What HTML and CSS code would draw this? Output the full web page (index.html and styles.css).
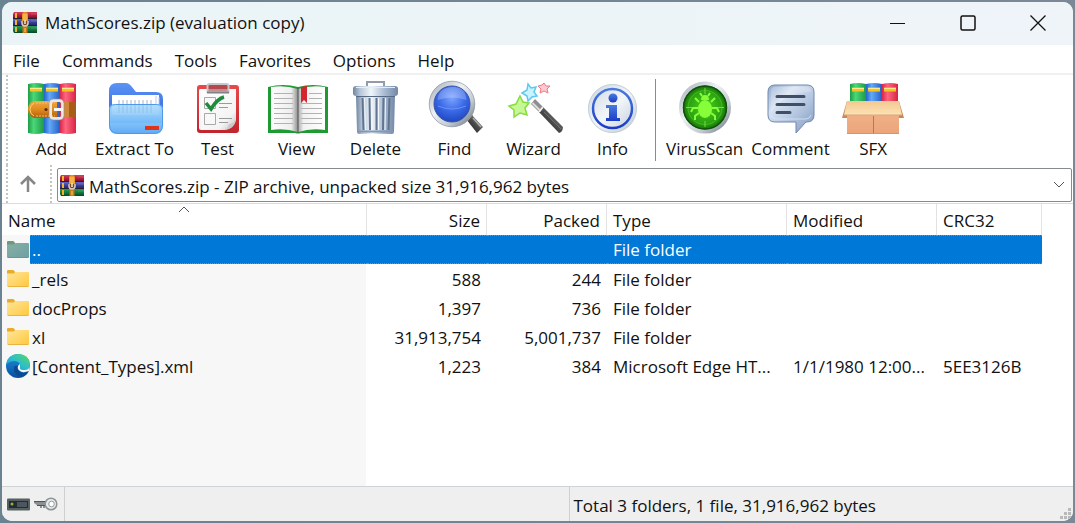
FILE: index.html
```html
<!DOCTYPE html>
<html lang="en">
<head>
    <meta charset="UTF-8">
    <meta name="viewport" content="width=device-width, initial-scale=1.0">
    <title>MathScores.zip (evaluation copy)</title>
    <link rel="stylesheet" href="styles.css">
</head>
<body>

<!-- Shared shapes -->
<svg class="defs" aria-hidden="true">
    <defs>
        <linearGradient id="gRed" x2="0" y2="1"><stop offset="0" stop-color="#d8405c"/><stop offset=".5" stop-color="#b01c3a"/><stop offset="1" stop-color="#6d0d1f"/></linearGradient>
        <linearGradient id="gBlue" x2="0" y2="1"><stop offset="0" stop-color="#6468c4"/><stop offset=".5" stop-color="#3c3c96"/><stop offset="1" stop-color="#1d1d5c"/></linearGradient>
        <linearGradient id="gGreen" x2="0" y2="1"><stop offset="0" stop-color="#2c9a58"/><stop offset=".5" stop-color="#127a40"/><stop offset="1" stop-color="#0a4421"/></linearGradient>
        <linearGradient id="bookGreen"><stop offset="0" stop-color="#1e9c48"/><stop offset=".35" stop-color="#4ad878"/><stop offset="1" stop-color="#1c9a48"/></linearGradient>
        <linearGradient id="bookBlue"><stop offset="0" stop-color="#2464c8"/><stop offset=".35" stop-color="#62a8fb"/><stop offset="1" stop-color="#2560c4"/></linearGradient>
        <linearGradient id="bookRed"><stop offset="0" stop-color="#d82848"/><stop offset=".35" stop-color="#ff6680"/><stop offset="1" stop-color="#d82444"/></linearGradient>
        <linearGradient id="belt" x2="0" y2="1"><stop offset="0" stop-color="#f2a840"/><stop offset=".5" stop-color="#e08a1e"/><stop offset="1" stop-color="#b05e0c"/></linearGradient>
        <linearGradient id="metal" x2="1" y2="1"><stop offset="0" stop-color="#a8b0ba"/><stop offset=".4" stop-color="#eef1f4"/><stop offset=".7" stop-color="#c4cbd2"/><stop offset="1" stop-color="#6f7882"/></linearGradient>
        <linearGradient id="folderBack" x2="0" y2="1"><stop offset="0" stop-color="#5b93f5"/><stop offset="1" stop-color="#2f5fd8"/></linearGradient>
        <linearGradient id="folderFront" x2="0" y2="1"><stop offset="0" stop-color="#b5defc"/><stop offset=".5" stop-color="#84c6fb"/><stop offset="1" stop-color="#58a6f4"/></linearGradient>
        <linearGradient id="clip" x2="0" y2="1"><stop offset="0" stop-color="#e8494a"/><stop offset="1" stop-color="#c2242e"/></linearGradient>
        <linearGradient id="paper" x2="1" y2="1"><stop offset="0" stop-color="#fff"/><stop offset=".75" stop-color="#f4f4f4"/><stop offset="1" stop-color="#bcbcbc"/></linearGradient>
        <linearGradient id="pageL"><stop offset="0" stop-color="#fdfdfd"/><stop offset=".75" stop-color="#eee"/><stop offset="1" stop-color="#8e8e8e"/></linearGradient>
        <linearGradient id="pageR"><stop offset="0" stop-color="#a8a8a8"/><stop offset=".2" stop-color="#f1f1f1"/><stop offset="1" stop-color="#fff"/></linearGradient>
        <linearGradient id="can"><stop offset="0" stop-color="#6f849f"/><stop offset=".15" stop-color="#b4c4d8"/><stop offset=".4" stop-color="#f0f5fa"/><stop offset=".7" stop-color="#a9bbd2"/><stop offset="1" stop-color="#7288a6"/></linearGradient>
        <radialGradient id="lens" cx=".5" cy=".35" r=".65"><stop offset="0" stop-color="#7ea4ff"/><stop offset=".5" stop-color="#3a6ae8"/><stop offset="1" stop-color="#1b3fb8"/></radialGradient>
        <linearGradient id="handle" x1="0" y1="1" x2="1" y2="0"><stop offset="0" stop-color="#111"/><stop offset=".5" stop-color="#4c4c4c"/><stop offset="1" stop-color="#aaa"/></linearGradient>
        <linearGradient id="infoBg" x2="1" y2="1"><stop offset="0" stop-color="#cbd5df"/><stop offset=".5" stop-color="#f2f6f9"/><stop offset="1" stop-color="#bcc9d5"/></linearGradient>
        <linearGradient id="infoInk" x2="0" y2="1"><stop offset="0" stop-color="#4a7ae0"/><stop offset="1" stop-color="#1c3cc8"/></linearGradient>
        <radialGradient id="scan"><stop offset="0" stop-color="#4cd01c"/><stop offset=".7" stop-color="#2aa010"/><stop offset="1" stop-color="#0c5a06"/></radialGradient>
        <linearGradient id="bubble" x2="1" y2="1"><stop offset="0" stop-color="#8fa8cc"/><stop offset=".3" stop-color="#d6e2f2"/><stop offset=".6" stop-color="#b4c6e0"/><stop offset="1" stop-color="#7f98be"/></linearGradient>
        <linearGradient id="box" x2="0" y2="1"><stop offset="0" stop-color="#d08a58"/><stop offset=".4" stop-color="#f0b088"/><stop offset="1" stop-color="#eba47a"/></linearGradient>
        <linearGradient id="flap" x2="0" y2="1"><stop offset="0" stop-color="#f2c890"/><stop offset="1" stop-color="#fde3b4"/></linearGradient>
        <linearGradient id="yellow" x2="1" y2="1"><stop offset="0" stop-color="#ffe59a"/><stop offset="1" stop-color="#ffc83c"/></linearGradient>
        <linearGradient id="teal" x2="1" y2="1"><stop offset="0" stop-color="#86b0a6"/><stop offset="1" stop-color="#6f9fa0"/></linearGradient>
        <linearGradient id="edgeTop" y1="1" y2="0"><stop offset="0" stop-color="#1a90d8"/><stop offset=".5" stop-color="#2cc0c8"/><stop offset="1" stop-color="#62d858"/></linearGradient>
        <linearGradient id="edgeLow" x2="0" y2="1"><stop offset="0" stop-color="#1c90e0"/><stop offset="1" stop-color="#0b4f9c"/></linearGradient>

        <symbol id="archive" viewBox="0 0 24 21">
            <path d="M1 0h23v7H0V2z" fill="url(#gRed)"/>
            <path d="M0 7h24v7H0z" fill="url(#gBlue)"/>
            <path d="M0 14h24v7H1l-1-2z" fill="url(#gGreen)"/>
            <path d="M3 1v5M3 8v5M3 15v5" stroke="#f2b430" stroke-width="2"/>
            <path d="M0 6.500h24M0 13.500h24" stroke="#26202c"/>
            <path d="M18 2h6M18 9h6M18 16h6" stroke="#fff" stroke-opacity=".15"/>
            <path d="M9 3q0-3 3-3t3 3v7H9z" fill="#e89828"/>
            <path d="M9.500 14h5v7h-5z" fill="#c87818"/>
            <path d="M10 3h4M10 5h4M10 7h4M11 17h2M11 19h2" stroke="#ffcf68"/>
            <path d="M9 9v2q0 3 3 3t3-3V9" fill="#7c4a20" stroke="#d8ccc4" stroke-width="1.500"/>
            <path d="M12 8v4" stroke="#f4ead8" stroke-width="1.500"/>
        </symbol>
        <symbol id="books" viewBox="0 0 48 51">
            <path d="M0 1q8-2 16 0v49q-8 2-16 0z" fill="url(#bookGreen)"/>
            <path d="M16 1q8-2 16 0v49q-8 2-16 0z" fill="url(#bookBlue)"/>
            <path d="M32 1q8-2 16 0v49q-8 2-16 0z" fill="url(#bookRed)"/>
            <path d="M2 6.500h12M18 6.500h12M34 6.500h12" stroke="#f8c51c" stroke-width="4"/>
            <path d="M2 5.500h12M18 5.500h12M34 5.500h12" stroke="#ffe987"/>
        </symbol>
        <symbol id="folder" viewBox="0 0 22 17">
            <path d="M0 1q0-1 1-1h5q1 0 2 2v3H0z" fill="#e8ac28"/>
            <path d="M0 3.500h6.500L8.500 2H21q1 0 1 1v13q0 1-1 1H1q-1 0-1-1z" fill="url(#yellow)"/>
            <path d="M1 16.500h20" stroke="#eab445"/>
        </symbol>
        <symbol id="folder-up" viewBox="0 0 22 17">
            <path d="M0 1q0-1 1-1h5q1 0 2 2v3H0z" fill="#6f9a7a"/>
            <path d="M0 3.500h6.500L8.500 2H21q1 0 1 1v13q0 1-1 1H1q-1 0-1-1z" fill="url(#teal)"/>
            <path d="M1 16.500h20" stroke="#6c978c"/>
        </symbol>
    </defs>
</svg>

<div class="window">
    <header class="titlebar">
        <svg class="archive-icon" aria-hidden="true"><use href="#archive"/></svg>
        <h1 class="title">MathScores.zip (evaluation copy)</h1>
        <div class="window-buttons">
            <button type="button" aria-label="Minimize"><svg width="16" height="16" viewBox="0 0 16 16"><path d="M0 8.500h15"/></svg></button>
            <button type="button" aria-label="Maximize"><svg width="16" height="16" viewBox="0 0 16 16"><rect x="1" y="1" width="14" height="14" rx="1.500" stroke-width="1.500"/></svg></button>
            <button type="button" aria-label="Close"><svg width="16" height="16" viewBox="0 0 16 16"><path d="M.5.500l15 15M15.500.500l-15 15" stroke-width="1.300"/></svg></button>
        </div>
    </header>

    <nav class="menu">
        <button type="button">File</button>
        <button type="button">Commands</button>
        <button type="button">Tools</button>
        <button type="button">Favorites</button>
        <button type="button">Options</button>
        <button type="button">Help</button>
    </nav>

    <div class="toolbar">
        <span class="grip"></span>
        <button type="button" class="tool">
            <svg viewBox="0 0 64 56">
                <use href="#books" x="8" y="4" width="48" height="51"/>
                <path d="M41 23h15v15H41z" fill="#a85c18"/>
                <path d="M44 23h5v15h-5z" fill="#d08838"/>
                <path d="M14 22h23v17H14q-6-2-6-8.500T14 22z" fill="url(#belt)"/>
                <path d="M14 24q-4 2-4 6.500t4 6.500" fill="none" stroke="#ffd070"/>
                <path d="M16 24h19M16 37h19" stroke="#f8c070" stroke-dasharray="2 1"/>
                <circle cx="26" cy="30.500" r="1.600" fill="#5c2c08"/>
                <rect x="30.500" y="21.500" width="12" height="18" rx="3" fill="none" stroke="#e9e6e4" stroke-width="3"/>
                <rect x="29" y="20" width="15" height="21" rx="4" fill="none" stroke="#9b8f8a" stroke-width=".6"/>
                <path d="M34 30.500h9" stroke="#f6f6f6" stroke-width="3"/>
            </svg>
            Add
        </button>
        <button type="button" class="tool">
            <svg viewBox="0 0 64 56">
                <path d="M6 12q0-8 8-8h9q3 0 6 4l4 5h20q7 0 7 7v24H6z" fill="url(#folderBack)"/>
                <path d="M9 16h47v20H9z" fill="#fff"/>
                <path d="M16 21v9M20 21v9M24 21v9M28 21v9M32 21v9M36 21v9M40 21v9M44 21v9M48 21v9" stroke="#a9b4c0"/>
                <path d="M53 17v20M56 18v19" stroke="#b8cce8"/>
                <path d="M6 31q0-6 6-6h42q6 0 6 6v15q0 9-9 9H15q-9 0-9-9z" fill="url(#folderFront)" fill-opacity=".95"/>
                <path d="M16 26v8M20 26v8M24 26v8M28 26v8M32 26v8M36 26v8M40 26v8M44 26v8M48 26v8" stroke="#8db8dc" stroke-opacity=".7"/>
                <path d="M6.500 31q0-5.500 6-5.500h41q6 0 6 5.500v15q0 8.500-9 8.500h-35q-9 0-9-8.500z" fill="none" stroke="#4d9aec"/>
                <path d="M42 47h14v4H42z" fill="#e03418"/>
            </svg>
            Extract To
        </button>
        <button type="button" class="tool">
            <svg viewBox="0 0 64 56">
                <rect x="11" y="6" width="42" height="48" rx="3" fill="url(#clip)"/>
                <path d="M14 10h36v31q-2 9-11 10H15q-2 0-2-2V12q0-2 1-2z" fill="url(#paper)"/>
                <path d="M50 41q-3 4-7 4-1 5-5 6 10-1 12-10z" fill="#c9c9c9"/>
                <path d="M18.500 18.500h11v11h-11zM18.500 34.500h11v11h-11z" fill="#f8f8f8" stroke="#a9a9a9"/>
                <path d="M33 24.500h13M33 28.500h9M33 39.500h13M33 43.500h9" stroke="#9a9a9a"/>
                <path d="M20 24l5 6Q31 20 38 18" fill="none" stroke="#1f8a3a" stroke-width="3.500"/>
                <path d="M21.500 13V7q0-2 2-2h17q2 0 2 2v6z" fill="#98464c" fill-opacity=".6" stroke="#c5c8cc" stroke-width="2"/>
                <path d="M21 13.500h22" stroke="#7f8388" stroke-width="2"/>
            </svg>
            Test
        </button>
        <button type="button" class="tool">
            <svg viewBox="0 0 64 56">
                <path d="M3 8q15-4 30 0 15-4 30 0v46H36q-3 1-6 0H3z" fill="#1f9a33"/>
                <path d="M6 8q14-2 27 2v43q-13-4-27-2z" fill="url(#pageL)"/>
                <path d="M60 8q-14-2-27 2v43q13-4 27-2z" fill="url(#pageR)"/>
                <path d="M9 14.500h19M9 19.500h19M9 24.500h19M9 29.500h19M9 34.500h19M9 39.500h19M9 44.500h19M44 14.500h13M44 19.500h13M36 24.500h21M36 29.500h21M36 34.500h21M36 39.500h21M36 44.500h21" stroke="#b2b2b2"/>
                <path d="M36 8l6-1v17l-3-3-3 3z" fill="#d3262e"/>
                <path d="M33 9v45" stroke="#555"/>
            </svg>
            View
        </button>
        <button type="button" class="tool">
            <svg viewBox="0 0 64 56">
                <path d="M23 8V3h17v5" fill="none" stroke="#939ba8" stroke-width="2"/>
                <path d="M12 16h39l-1 37q0 2-2 2H15q-2 0-2-2z" fill="url(#can)"/>
                <path d="M18.500 19l1 32M25.500 19l.5 32M32.500 19v32M39.500 19l-.5 32M45.500 19l-1 32" stroke="#61758f" stroke-width="2"/>
                <path d="M20.500 19l1 32M27.500 19l.5 32M34.500 19v32M41.500 19l-.5 32" stroke="#f2f6fa"/>
                <rect x="9" y="7" width="45" height="10" rx="3" fill="url(#can)"/>
                <path d="M12 8.500h39" stroke="#e6edf4"/>
                <path d="M12 17.500h39" stroke="#566a85"/>
                <path d="M14 52.500h35" stroke="#8297b2" stroke-width="2"/>
            </svg>
            Delete
        </button>
        <button type="button" class="tool">
            <svg viewBox="0 0 64 56">
                <path d="M43 40l5-5 12 13-6 6z" fill="url(#handle)"/>
                <path d="M41 38l5-5 4 4-5 5z" fill="#6a6a6a"/>
                <path d="M50 39l8 9" stroke="#b0b0b0" stroke-width="1.500"/>
                <circle cx="29" cy="25" r="20.500" fill="url(#lens)" stroke="url(#metal)" stroke-width="5"/>
                <circle cx="29" cy="25" r="22.800" fill="none" stroke="#8e98a6" stroke-width=".7"/>
                <circle cx="29" cy="25" r="18" fill="none" stroke="#3a54a4"/>
                <path d="M14.500 21q1-12 14.500-13t14.500 13q-14-5-29 0z" fill="#fff" fill-opacity=".22"/>
                <path d="M15 27q14 6 28 0" fill="none" stroke="#7ba0ff" stroke-opacity=".7"/>
            </svg>
            Find
        </button>
        <button type="button" class="tool">
            <svg viewBox="0 0 64 56">
                <path d="M18 17l3 6 6 1-4 5 2 7-7-2-6 4v-7l-5-4 7-2z" fill="#c5f794" stroke="#86dc42" stroke-width="1.500"/>
                <path d="M26 5l3 4 5-1-2 5 3 4-5 1-4 4-1-5-5-3 5-3z" fill="#c8f4ff" stroke="#60c8ee" stroke-width="1.500"/>
                <path d="M42 4l2 3h4l-3 3 1 4-4-2-4 2 1-4-3-3 4-1z" fill="#ffc9d0" stroke="#ee7888"/>
                <path d="M29 25l4-5 9 9-4 5z" fill="#8e8e8e"/>
                <path d="M37 33l4-5 20 20q0 5-4 6z" fill="url(#handle)"/>
                <path d="M30.500 24l8 8" stroke="#dcdcdc" stroke-width="2"/>
                <path d="M37 33l4-5" stroke="#f0f0f0" stroke-width="2"/>
                <path d="M42 33l17 17" stroke="#707070"/>
            </svg>
            Wizard
        </button>
        <button type="button" class="tool">
            <svg viewBox="0 0 64 56">
                <circle cx="31.500" cy="29.500" r="24" fill="url(#infoBg)" stroke="#c2ccd4"/>
                <circle cx="31.500" cy="29.500" r="19.500" fill="none" stroke="url(#infoInk)" stroke-width="2.500"/>
                <circle cx="32" cy="19" r="4.500" fill="url(#infoInk)"/>
                <path d="M25 26h11v13h3v3H25v-3h3V29h-3z" fill="url(#infoInk)"/>
            </svg>
            Info
        </button>
        <span class="separator"></span>
        <button type="button" class="tool">
            <svg viewBox="0 0 64 56">
                <circle cx="32" cy="28.500" r="24" fill="url(#scan)" stroke="url(#metal)" stroke-width="4"/>
                <circle cx="32" cy="28.500" r="21.500" fill="none" stroke="#11510c" stroke-width="1.500"/>
                <circle cx="32" cy="28.500" r="17" fill="none" stroke="#58c832" stroke-opacity=".6"/>
                <path d="M32 9v6M32 42v6M13 28.500h6M45 28.500h6" stroke="#6fe03c"/>
                <path d="M26 23l-4-4M38 23l4-4M25 29h-5l-2 4M39 29h5l2 4M26 34l-4 3v4M38 34l4 3v4M29 17l-2-3M35 17l2-3" fill="none" stroke="#86ff38" stroke-width="2"/>
                <path d="M28 21q0-5 4-5t4 5z" fill="#86ff38"/>
                <ellipse cx="32" cy="30" rx="7" ry="9" fill="#86ff38"/>
            </svg>
            VirusScan
        </button>
        <button type="button" class="tool">
            <svg viewBox="0 0 64 56">
                <path d="M17 6h32q7 0 7 7v23q0 7-7 7h-1L38 54V43H17q-7 0-7-7V13q0-7 7-7z" fill="url(#bubble)" stroke="#7188ac"/>
                <path d="M17 8h30q6 0 6 5-26 0-40 20V13q0-5 4-5z" fill="#fff" fill-opacity=".22"/>
                <path d="M13 36q1 4 5 4h30q4 0 5-4" fill="none" stroke="#dbe6f5" stroke-opacity=".8"/>
                <path d="M19 17.500h27M19 25.500h27M19 33.500h13" stroke="#414f66" stroke-width="3" stroke-linecap="round"/>
            </svg>
            Comment
        </button>
        <button type="button" class="tool">
            <svg viewBox="0 0 64 56">
                <use href="#books" x="9" y="4" width="48" height="51"/>
                <path d="M6 22h52v33H6z" fill="url(#box)"/>
                <path d="M6 22v17H1zM58 22v17h5z" fill="#c8875c"/>
                <path d="M6 22h52l3 14H3z" fill="url(#flap)"/>
                <path d="M3 36h58" stroke="#d9a878"/>
                <path d="M32.500 37v18" stroke="#b87850"/>
                <path d="M6 54.500h52" stroke="#d49470"/>
            </svg>
            SFX
        </button>
    </div>

    <div class="address-bar">
        <span class="grip"></span>
        <button type="button" class="up" aria-label="Up one level">
            <svg width="18" height="18" viewBox="0 0 18 18"><path d="M9 17V2M2 9l7-7 7 7"/></svg>
        </button>
        <span class="grip"></span>
        <div class="address">
            <svg class="archive-icon" aria-hidden="true"><use href="#archive"/></svg>
            <select aria-label="Current path">
                <option>MathScores.zip - ZIP archive, unpacked size 31,916,962 bytes</option>
            </select>
            <svg class="chevron" width="12" height="8" viewBox="0 0 12 8"><path d="M1 1l5 5 5-5"/></svg>
        </div>
    </div>

    <main class="file-list">
        <table class="files">
            <colgroup>
                <col class="col-icon"><col class="col-name"><col class="col-size"><col class="col-size">
                <col class="col-type"><col class="col-modified"><col class="col-crc">
            </colgroup>
            <thead>
                <tr>
                    <th colspan="2" aria-sort="ascending">Name<svg class="sort" width="12" height="7" viewBox="0 0 12 7"><path d="M1 6l5-5 5 5"/></svg></th>
                    <th class="num">Size</th>
                    <th class="num">Packed</th>
                    <th>Type</th>
                    <th>Modified</th>
                    <th>CRC32</th>
                </tr>
            </thead>
            <tbody>
                <tr class="selected">
                    <td class="icon"><svg class="folder"><use href="#folder-up"/></svg></td>
                    <td class="name">..</td><td class="num"></td><td class="num"></td><td>File folder</td><td></td><td></td>
                </tr>
                <tr>
                    <td class="icon"><svg class="folder"><use href="#folder"/></svg></td>
                    <td class="name">_rels</td><td class="num">588</td><td class="num">244</td><td>File folder</td><td></td><td></td>
                </tr>
                <tr>
                    <td class="icon"><svg class="folder"><use href="#folder"/></svg></td>
                    <td class="name">docProps</td><td class="num">1,397</td><td class="num">736</td><td>File folder</td><td></td><td></td>
                </tr>
                <tr>
                    <td class="icon"><svg class="folder"><use href="#folder"/></svg></td>
                    <td class="name">xl</td><td class="num">31,913,754</td><td class="num">5,001,737</td><td>File folder</td><td></td><td></td>
                </tr>
                <tr>
                    <td class="icon">
                        <svg class="edge" viewBox="0 0 24 24">
                            <circle cx="12" cy="12" r="12" fill="url(#edgeLow)"/>
                            <path d="M0 11Q2 0 12 0q11 0 12 10 0 6-6 6-5 0-4-3 1-5-5-6-6 0-9 4z" fill="url(#edgeTop)"/>
                            <path d="M8 13q-1 8 7 10 5-1 7-5-5 2-8 0-3-2-2-6-3-1-4 1z" fill="#0c4a94"/>
                            <path d="M14 10q-3 2-2 5 3 5 11 2l1-5q-1 4-6 4-5 0-4-3z" fill="#f7f7f7"/>
                        </svg>
                    </td>
                    <td class="name">[Content_Types].xml</td><td class="num">1,223</td><td class="num">384</td><td>Microsoft Edge HT...</td><td>1/1/1980 12:00...</td><td>5EE3126B</td>
                </tr>
            </tbody>
        </table>
    </main>

    <footer class="statusbar">
        <div class="status-icons">
            <svg width="23" height="13" viewBox="0 0 23 13">
                <rect width="23" height="12" y=".5" rx="1" fill="#53605f"/>
                <rect x="2" y="3" width="19" height="7" fill="#252b2e"/>
                <rect x="10" y="4" width="10" height="5" fill="#4c5560"/>
                <circle cx="5" cy="6" r="1.500" fill="#9cb03c"/>
            </svg>
            <svg width="24" height="14" viewBox="0 0 24 14">
                <path d="M0 4h13v5h-2v2H9V9H8v2H6V9H4L0 6z" fill="#8b9192"/>
                <path d="M0 4.500h12M3 8.500h9" stroke="#4f5658"/>
                <circle cx="17" cy="7" r="5.800" fill="#e7eaea" stroke="#8d9496" stroke-width="1.500"/>
                <circle cx="17.500" cy="7" r="2.800" fill="#fff" stroke="#949a9c"/>
            </svg>
        </div>
        <div class="status-pane"></div>
        <div class="status-pane">Total 3 folders, 1 file, 31,916,962 bytes</div>
        <svg class="resize" width="12" height="12" viewBox="0 0 12 12"><path d="M9 0h3v3H9zM5 4h3v3H5zM9 4h3v3H9zM1 8h3v3H1zM5 8h3v3H5zM9 8h3v3H9z"/></svg>
    </footer>
</div>

</body>
</html>
```

FILE: styles.css
```css
/* General Styling */
* {
    box-sizing: border-box;
}

body {
    margin: 0;
    height: 100vh;
    padding: 2px;
    display: flex;
    background: linear-gradient(90deg, #6b8290, #7b8996);
    font-family: "Open Sans", "Noto Sans", sans-serif;
    font-size: 17px;
    color: #111;
}

button,
select {
    font: inherit;
    color: inherit;
    background: none;
    border: none;
    margin: 0;
    padding: 0;
}

svg {
    display: block;
    flex: none;
}

.defs {
    position: absolute;
    width: 0;
    height: 0;
}

.window {
    flex: 1;
    min-width: 0;
    display: flex;
    flex-direction: column;
    background-color: #fff;
    border-radius: 10px;
    overflow: hidden;
}

.archive-icon {
    width: 24px;
    height: 21px;
}

/* Title Bar */
.titlebar {
    display: flex;
    align-items: center;
    height: 43px;
    padding: 0 0 2px 11px;
    gap: 8px;
    background: linear-gradient(90deg, #eaf4f7, #eff4f9);
}

.title {
    flex: 1;
    margin: 0;
    font-size: 17px;
    font-weight: normal;
}

.window-buttons {
    display: flex;
    align-self: stretch;
}

.window-buttons button {
    width: 70px;
    display: flex;
    align-items: center;
    justify-content: center;
}

.window-buttons svg {
    fill: none;
    stroke: #111;
}

/* Menu */
.menu {
    display: flex;
    padding-top: 4px;
    border-bottom: 2px solid #f0f0f0;
}

.menu button {
    padding: 0 11px;
    line-height: 24px;
}

/* Toolbar */
.toolbar {
    display: flex;
    height: 90px;
    padding-left: 4px;
}

.grip {
    align-self: stretch;
    width: 6px;
    border-left: 2px dotted #c4c4c4;
}

.tool {
    display: flex;
    flex-direction: column;
    align-items: center;
    min-width: 79px;
    padding: 4px 4px 0;
    line-height: 27px;
}

.tool svg {
    width: 64px;
    height: 56px;
}

.separator {
    width: 1px;
    margin: 4px 6px 4px 3px;
    background-color: #8a8a8a;
}

/* Address Bar */
.address-bar {
    display: flex;
    height: 39px;
    padding-left: 4px;
    border-bottom: 1px solid #dcdcdc;
}

.up {
    width: 38px;
    padding-right: 6px;
    display: flex;
    align-items: center;
    justify-content: center;
}

.up svg {
    fill: none;
    stroke: #868686;
    stroke-width: 2.5;
}

.address {
    flex: 1;
    position: relative;
    display: flex;
    align-items: center;
    margin: 3px 1px 1px;
    padding-left: 2px;
    border: 1px solid #858b93;
    border-radius: 2px;
}

.address select {
    flex: 1;
    min-width: 0;
    height: 100%;
    padding: 2px 30px 0 5px;
    appearance: none;
}

.chevron {
    position: absolute;
    right: 6px;
    pointer-events: none;
}

.chevron,
.sort {
    fill: none;
    stroke: #555;
}

/* File List */
.file-list {
    flex: 1;
    min-height: 0;
    overflow: hidden;
    background: linear-gradient(90deg, #f7f7f7 364px, #fff 0);
}

.files {
    border-collapse: separate;
    border-spacing: 0;
    table-layout: fixed;
    width: 1040px;
}

/* white header strip across the whole list */
.files thead {
    background-color: #fff;
}

.col-icon { width: 28px; }
.col-name { width: 337px; }
.col-size { width: 120px; }
.col-type { width: 180px; }
.col-modified { width: 150px; }
.col-crc { width: 105px; }

.files th {
    position: relative;
    height: 31px;
    padding: 2px 6px 0;
    border-right: 1px solid #e2e2e2;
    text-align: left;
    font-weight: normal;
}

.files .sort {
    position: absolute;
    top: 2px;
    left: 50%;
    margin-left: -6px;
}

.files td {
    height: 29px;
    padding: 2px 6px 0;
    line-height: 27px;
    white-space: nowrap;
    overflow: hidden;
}

.files .num {
    text-align: right;
}

.files td.name {
    padding-left: 2px;
}

.files td.icon {
    padding: 0 0 0 4px;
}

.folder {
    width: 22px;
    height: 17px;
    margin-left: 1px;
}

.edge {
    width: 24px;
    height: 24px;
}

.selected td:not(.icon) {
    background-color: #0078d7;
    color: #fff;
    padding-top: 1px;
    border-top: 1px dotted #c08040;
    border-bottom: 1px dotted #c08040;
    line-height: 26px;
}

/* Status Bar */
.statusbar {
    position: relative;
    display: flex;
    height: 35px;
    border-top: 1px solid #d0d3d5;
    background-color: #efefef;
}

.status-icons {
    display: flex;
    align-items: center;
    gap: 4px;
    width: 62px;
    padding-left: 5px;
}

.status-pane {
    flex: 1;
    padding: 4px 4px 0;
    line-height: 30px;
    border-left: 1px solid #d0d0d0;
}

.resize {
    position: absolute;
    right: 2px;
    bottom: 1px;
    fill: #b9b9b9;
}
```
